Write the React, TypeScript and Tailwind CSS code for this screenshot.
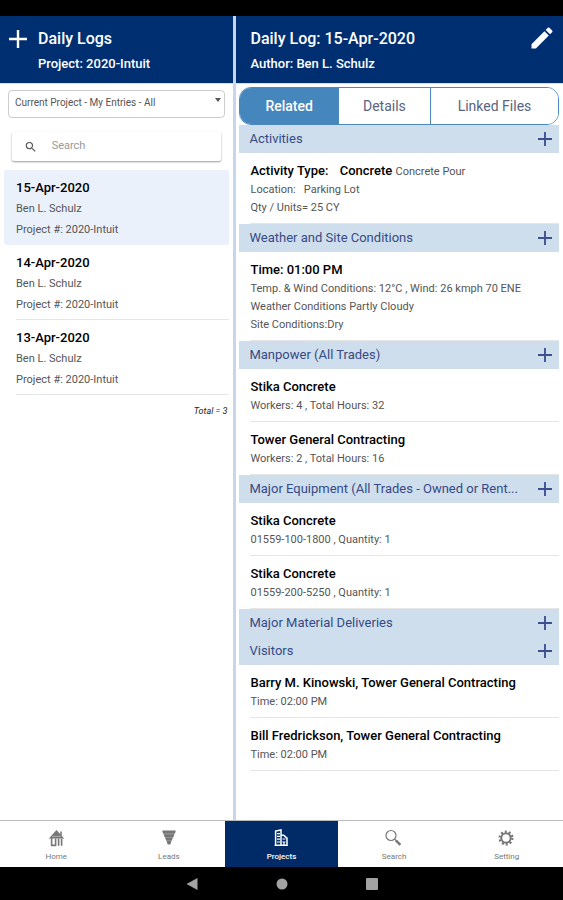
import { useState } from 'react';
import type { ReactNode } from 'react';
import { MdEdit, MdSearch } from 'react-icons/md';

type Entry = { title: ReactNode; lines: string[] };
type Section = { name: string; entries: Entry[] };

const logs = [
  { date: '15-Apr-2020', author: 'Ben L. Schulz', project: '2020-Intuit' },
  { date: '14-Apr-2020', author: 'Ben L. Schulz', project: '2020-Intuit' },
  { date: '13-Apr-2020', author: 'Ben L. Schulz', project: '2020-Intuit' },
];

const sections: Section[] = [
  {
    name: 'Activities',
    entries: [
      {
        title: (
          <>
            Activity Type: <span className="ml-2">Concrete</span>{' '}
            <span className="text-[11px] leading-none font-normal text-[#555]">Concrete Pour</span>
          </>
        ),
        lines: ['Location:\u00a0\u00a0 Parking Lot', 'Qty / Units= 25 CY'],
      },
    ],
  },
  {
    name: 'Weather and Site Conditions',
    entries: [
      {
        title: 'Time: 01:00 PM',
        lines: [
          'Temp. & Wind Conditions: 12°C , Wind: 26 kmph 70 ENE',
          'Weather Conditions Partly Cloudy',
          'Site Conditions:Dry',
        ],
      },
    ],
  },
  {
    name: 'Manpower (All Trades)',
    entries: [
      { title: 'Stika Concrete', lines: ['Workers: 4 , Total Hours: 32'] },
      { title: 'Tower General Contracting', lines: ['Workers: 2 , Total Hours: 16'] },
    ],
  },
  {
    name: 'Major Equipment (All Trades - Owned or Rent...',
    entries: [
      { title: 'Stika Concrete', lines: ['01559-100-1800 , Quantity: 1'] },
      { title: 'Stika Concrete', lines: ['01559-200-5250 , Quantity: 1'] },
    ],
  },
  { name: 'Major Material Deliveries', entries: [] },
  {
    name: 'Visitors',
    entries: [
      { title: 'Barry M. Kinowski, Tower General Contracting', lines: ['Time: 02:00 PM'] },
      { title: 'Bill Fredrickson, Tower General Contracting', lines: ['Time: 02:00 PM'] },
    ],
  },
];

function PlusIcon({ className }: { className: string }) {
  return (
    <svg viewBox="0 0 18 18" className={className} fill="none" stroke="currentColor" strokeWidth="2.4">
      <path d="M9 0v18M0 9h18" />
    </svg>
  );
}

function HomeIcon() {
  return (
    <svg viewBox="0 0 18 18" className="size-[18px]" fill="none" stroke="currentColor">
      <path d="M9.5 1 1.8 9.6h15.4Z" fill="currentColor" stroke="none" />
      <path d="M5 7.4h9" stroke="#fff" strokeWidth=".4" />
      <path d="M14 2.5v4" strokeWidth="1.6" />
      <path d="M4.6 9v7.4h4V9.5M11.6 16.8V9.5M14.6 16.8V9.5" strokeWidth="1.6" />
    </svg>
  );
}

function FunnelIcon() {
  return (
    <svg viewBox="0 0 18 18" className="size-[18px]" fill="currentColor">
      <path d="M2.2 1.5h13.6l-.8 3H3ZM3.6 5.2h10.8l-1 2.7H4.6ZM5.2 8.6h7.6l-1 2.8H6.2ZM6.8 12.1h4.4L10.3 15.5H7.7Z" />
      <path d="M3 3.5h12L10.3 15H7.7Z" opacity=".6" />
    </svg>
  );
}

function BuildingIcon() {
  return (
    <svg viewBox="0 0 18 18" className="size-[18px]" fill="none" stroke="currentColor" strokeWidth="1.5">
      <path d="M3.6 16.5V2l5.4-1v15.5M9 6l2.6.2 3.4 3v7.3M2.6 16.2h13.2" />
      <path d="M5 4.6h3M5 7.4h3M5 10.2h3M5 13h3M10.5 10h3M10.5 13h3M12 13v3" strokeWidth="1.2" />
    </svg>
  );
}

function GlassIcon() {
  return (
    <svg viewBox="0 0 18 18" className="size-[18px]" fill="none" stroke="currentColor">
      <circle cx="6" cy="6.5" r="5" strokeWidth="1.2" />
      <path d="m9.6 10.1 1.6 1.6" strokeWidth="1.2" />
      <path d="m10.8 11.3 4.6 4.6" strokeWidth="2.4" />
    </svg>
  );
}

function GearIcon() {
  return (
    <svg viewBox="0 0 18 18" className="size-[18px]" fill="none" stroke="currentColor">
      <circle cx="8" cy="9" r="4.7" strokeWidth="2" />
      <circle cx="8" cy="9" r="6.4" strokeWidth="2.2" strokeDasharray="2.02 2" />
    </svg>
  );
}

const navItems = [
  { label: 'Home', icon: <HomeIcon /> },
  { label: 'Leads', icon: <FunnelIcon /> },
  { label: 'Projects', icon: <BuildingIcon /> },
  { label: 'Search', icon: <GlassIcon /> },
  { label: 'Setting', icon: <GearIcon /> },
];

function LogList() {
  const [selected, setSelected] = useState(0);

  return (
    <aside className="flex flex-col border-r-3 border-[#c8d6ec]">
      <div className="relative mx-2 mt-1.5">
        <select
          aria-label="Filter"
          className="block w-full appearance-none rounded-sm border border-[#ccc] bg-white px-1.5 pt-1 pb-1.5 text-[10px] leading-4 text-[#555]"
        >
          <option>Current Project - My Entries - All</option>
        </select>
        <svg viewBox="0 0 6 4" className="pointer-events-none absolute top-2 right-1 h-1 w-1.5" fill="#555">
          <path d="M0 0h6L3 4Z" />
        </svg>
      </div>

      <div className="mx-3 mt-3.5 flex h-[29px] items-center rounded-xs bg-white px-3 shadow-[0_1px_2px_rgba(0,0,0,0.4)]">
        <MdSearch className="size-4 text-[#555]" />
        <input
          type="search"
          aria-label="Search"
          placeholder="Search"
          className="ml-3.5 w-full min-w-0 text-[11px] outline-none placeholder:text-[#999]"
        />
      </div>

      <ul className="mt-[9px] mr-1 ml-1">
        {logs.map((log, i) => (
          <li key={log.date} className={i === selected ? 'rounded-xs bg-[#ebf1fa]' : ''}>
            <button
              type="button"
              onClick={() => setSelected(i)}
              className="block w-full pl-3 text-left"
            >
              <span className={`block border-b pt-2 pb-1 ${i === selected ? 'border-transparent' : 'border-[#e6e6e6]'}`}>
                <span className="block text-[13px] leading-5 font-medium text-black">{log.date}</span>
                <span className="block text-[11px] leading-[21px] text-[#555]">{log.author}</span>
                <span className="block text-[11px] leading-[21px] text-[#555]">Project #: {log.project}</span>
              </span>
            </button>
          </li>
        ))}
      </ul>
      <p className="mt-2 mr-1.5 text-right text-[9px] leading-4 text-[#222] italic">Total = {logs.length}</p>
    </aside>
  );
}

function LogDetail() {
  const [tab, setTab] = useState('Related');

  return (
    <main className="mr-1 ml-[3px] pt-[3px]">
      <div className="grid h-[38px] grid-cols-[31fr_29fr_40fr] divide-x divide-[#4a8abf] overflow-hidden rounded-xl border border-[#4a8abf] text-[14px]">
        {['Related', 'Details', 'Linked Files'].map((name) => (
          <button
            key={name}
            type="button"
            onClick={() => setTab(name)}
            className={tab === name ? 'bg-[#4587bd] font-medium text-white' : 'bg-white text-[#5a6482]'}
          >
            {name}
          </button>
        ))}
      </div>

      {sections.map((section) => (
        <section key={section.name}>
          <div className="flex h-7 items-center justify-between bg-[#cfdeed] pr-[7px] pl-2.5">
            <h2 className="truncate text-[13px] text-[#364a85]">{section.name}</h2>
            <button type="button" aria-label={`Add to ${section.name}`} className="text-[#3d5090]">
              <PlusIcon className="size-3.5" />
            </button>
          </div>
          <div className="ml-[11px]">
            {section.entries.map((entry, i) => (
              <article key={i} className="border-b border-[#e6e6e6] pt-2 pb-1.5">
                <h3 className="text-[13px] leading-5 font-medium text-black">{entry.title}</h3>
                {entry.lines.map((line) => (
                  <p key={line} className="text-[11px] leading-[18px] whitespace-nowrap text-[#555]">{line}</p>
                ))}
              </article>
            ))}
          </div>
        </section>
      ))}
    </main>
  );
}

function App() {
  const [page, setPage] = useState('Projects');

  return (
    <div className="flex min-h-screen flex-col bg-white font-[Roboto,sans-serif]">
      <div className="h-4 bg-black" />

      <header className="grid h-[68px] grid-cols-[42fr_58fr] border-b border-[#d6deee] bg-[#002f71] text-white">
        <div className="flex border-r-3 border-[#c8d6ec] pt-3 pl-[9px]">
          <button type="button" aria-label="Add log" className="h-[22px]">
            <PlusIcon className="size-[18px]" />
          </button>
          <div className="ml-[11px]">
            <h1 className="text-[16px] leading-[22px] font-medium">Daily Logs</h1>
            <p className="mt-1 text-[13px] leading-5 font-medium">Project: 2020-Intuit</p>
          </div>
        </div>
        <div className="flex items-start justify-between pt-2 pr-[7px] pl-3.5">
          <div className="pt-1">
            <h1 className="text-[16px] leading-[22px] font-medium">Daily Log: 15-Apr-2020</h1>
            <p className="mt-1 text-[13px] leading-5 font-medium">Author: Ben L. Schulz</p>
          </div>
          <button type="button" aria-label="Edit log">
            <MdEdit className="size-7" />
          </button>
        </div>
      </header>

      <div className="grid flex-1 grid-cols-[42fr_58fr]">
        <LogList />
        <LogDetail />
      </div>

      <nav className="grid h-[47px] grid-cols-5 border-t border-[#bbb]">
        {navItems.map((item) => (
          <button
            key={item.label}
            type="button"
            onClick={() => setPage(item.label)}
            className={`flex flex-col items-center pt-2 text-[8px] leading-3 ${
              page === item.label ? 'bg-[#002b67] font-medium text-white' : 'text-[#777]'
            }`}
          >
            {item.icon}
            <span className="mt-1">{item.label}</span>
          </button>
        ))}
      </nav>

      <div className="flex h-[33px] items-center justify-center gap-[78px] bg-black text-[#a3a3a3]">
        <svg viewBox="0 0 12 12" className="size-3" fill="currentColor"><path d="M11.5 0v12L.5 6Z" /></svg>
        <svg viewBox="0 0 12 12" className="size-3" fill="currentColor"><circle cx="6" cy="6" r="5.5" /></svg>
        <svg viewBox="0 0 12 12" className="size-3" fill="currentColor"><rect width="12" height="12" rx="1" /></svg>
      </div>
    </div>
  );
}

export default App;
